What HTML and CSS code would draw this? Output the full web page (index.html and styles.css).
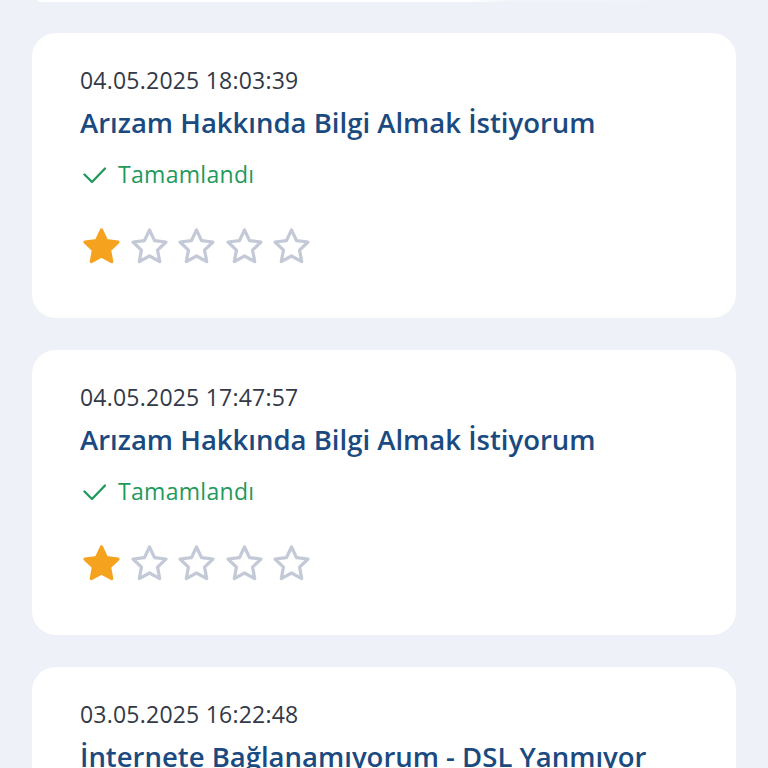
FILE: index.html
```html
<!DOCTYPE html>
<html lang="tr">
<head>
<meta charset="utf-8">
<link rel="stylesheet" href="styles.css">
</head>
<body>
<div class="list">
  <div class="card-tail"></div>

  <div class="card">
    <div class="date">04.05.2025 18:03:39</div>
    <div class="title">Arızam Hakkında Bilgi Almak İstiyorum</div>
    <div class="status">
      <svg class="check" viewBox="0 0 24 24"><path d="M2.5 12.5l7.5 7.5L23 6.5"/></svg>
      <span>Tamamlandı</span>
    </div>
    <div class="stars">
      <svg class="star on" viewBox="0 0 24 24"><path d="M12 2.8l2.8 5.9 6.4.8-4.7 4.5 1.2 6.4L12 17.3l-5.7 3.1 1.2-6.4-4.7-4.5 6.4-.8z"/></svg>
      <svg class="star" viewBox="0 0 24 24"><path d="M12 2.8l2.8 5.9 6.4.8-4.7 4.5 1.2 6.4L12 17.3l-5.7 3.1 1.2-6.4-4.7-4.5 6.4-.8z"/></svg>
      <svg class="star" viewBox="0 0 24 24"><path d="M12 2.8l2.8 5.9 6.4.8-4.7 4.5 1.2 6.4L12 17.3l-5.7 3.1 1.2-6.4-4.7-4.5 6.4-.8z"/></svg>
      <svg class="star" viewBox="0 0 24 24"><path d="M12 2.8l2.8 5.9 6.4.8-4.7 4.5 1.2 6.4L12 17.3l-5.7 3.1 1.2-6.4-4.7-4.5 6.4-.8z"/></svg>
      <svg class="star" viewBox="0 0 24 24"><path d="M12 2.8l2.8 5.9 6.4.8-4.7 4.5 1.2 6.4L12 17.3l-5.7 3.1 1.2-6.4-4.7-4.5 6.4-.8z"/></svg>
    </div>
  </div>

  <div class="card">
    <div class="date">04.05.2025 17:47:57</div>
    <div class="title">Arızam Hakkında Bilgi Almak İstiyorum</div>
    <div class="status">
      <svg class="check" viewBox="0 0 24 24"><path d="M2.5 12.5l7.5 7.5L23 6.5"/></svg>
      <span>Tamamlandı</span>
    </div>
    <div class="stars">
      <svg class="star on" viewBox="0 0 24 24"><path d="M12 2.8l2.8 5.9 6.4.8-4.7 4.5 1.2 6.4L12 17.3l-5.7 3.1 1.2-6.4-4.7-4.5 6.4-.8z"/></svg>
      <svg class="star" viewBox="0 0 24 24"><path d="M12 2.8l2.8 5.9 6.4.8-4.7 4.5 1.2 6.4L12 17.3l-5.7 3.1 1.2-6.4-4.7-4.5 6.4-.8z"/></svg>
      <svg class="star" viewBox="0 0 24 24"><path d="M12 2.8l2.8 5.9 6.4.8-4.7 4.5 1.2 6.4L12 17.3l-5.7 3.1 1.2-6.4-4.7-4.5 6.4-.8z"/></svg>
      <svg class="star" viewBox="0 0 24 24"><path d="M12 2.8l2.8 5.9 6.4.8-4.7 4.5 1.2 6.4L12 17.3l-5.7 3.1 1.2-6.4-4.7-4.5 6.4-.8z"/></svg>
      <svg class="star" viewBox="0 0 24 24"><path d="M12 2.8l2.8 5.9 6.4.8-4.7 4.5 1.2 6.4L12 17.3l-5.7 3.1 1.2-6.4-4.7-4.5 6.4-.8z"/></svg>
    </div>
  </div>

  <div class="card">
    <div class="date">03.05.2025 16:22:48</div>
    <div class="title">İnternete Bağlanamıyorum - DSL Yanmıyor</div>
    <div class="status">
      <svg class="check" viewBox="0 0 24 24"><path d="M2.5 12.5l7.5 7.5L23 6.5"/></svg>
      <span>Tamamlandı</span>
    </div>
  </div>
</div>
</body>
</html>
```
FILE: styles.css
```css
html, body {
  margin: 0;
  padding: 0;
  background: #eef1f7;
  height: 768px;
  overflow: hidden;
}
body {
  font-family: "Open Sans", "Noto Sans", sans-serif;
}
.list {
  display: flex;
  flex-direction: column;
  gap: 31px;
  padding: 0 32px;
}
.card-tail {
  height: 2px;
  margin: 0 6px;
  background: linear-gradient(90deg, #ffffff 0%, #ffffff 62%, #f2f4f9 68%, #eef1f7 100%);
  border-radius: 0 0 4px 4px;
}
.card {
  background: #ffffff;
  border-radius: 24px;
  padding: 32px 48px 50px;
  display: flex;
  flex-direction: column;
}
.card + .card {
  margin-top: 1px;
}
.date {
  font-size: 23px;
  line-height: 30px;
  color: #333946;
  letter-spacing: 0.22px;
}
.title {
  margin-top: 10px;
  font-size: 27.5px;
  line-height: 36px;
  font-weight: 600;
  color: #1a4a80;
  white-space: nowrap;
}
.status {
  margin-top: 18px;
  display: flex;
  align-items: center;
  gap: 12px;
  font-size: 23px;
  line-height: 30px;
  color: #1f9a5c;
  letter-spacing: 0.3px;
}
.check {
  width: 24px;
  height: 24px;
  margin-left: 2px;
  fill: none;
  stroke: #1f9a5c;
  stroke-width: 2.3;
  stroke-linecap: round;
  stroke-linejoin: round;
}
.stars {
  margin-top: 36px;
  display: flex;
  gap: 4.5px;
}
.star {
  width: 43px;
  height: 43px;
  fill: none;
  stroke: #c3c9d6;
  stroke-width: 1.8;
  stroke-linejoin: round;
}
.star.on {
  fill: #f5a31f;
  stroke: #f5a31f;
}
```
